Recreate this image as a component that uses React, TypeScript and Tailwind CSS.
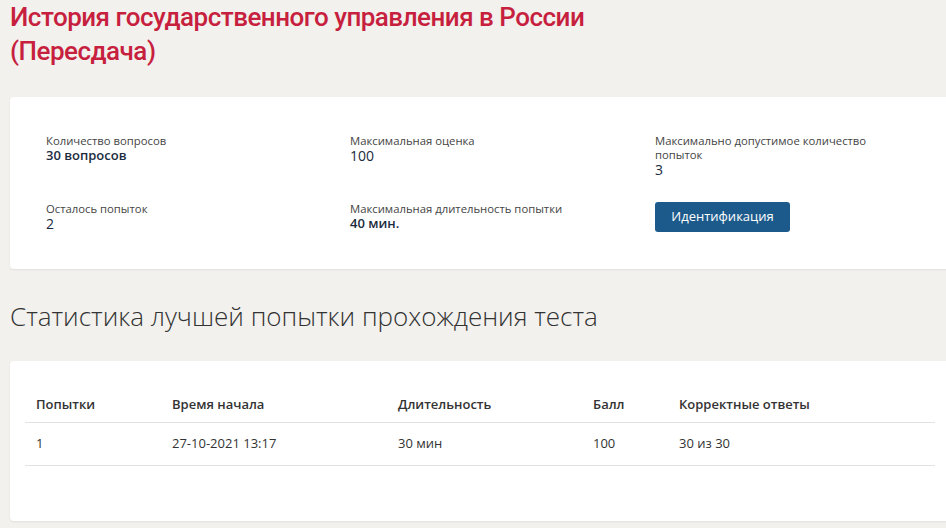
export default function App() {
  const info = [
    { label: "Количество вопросов", value: "30 вопросов", bold: true },
    { label: "Максимальная оценка", value: "100", bold: false },
    { label: "Максимально допустимое количество попыток", value: "3", bold: false },
    { label: "Осталось попыток", value: "2", bold: false },
    { label: "Максимальная длительность попытки", value: "40 мин.", bold: true },
  ];

  const head = ["Попытки", "Время начала", "Длительность", "Балл", "Корректные ответы"];
  const row = ["1", "27-10-2021 13:17", "30 мин", "100", "30 из 30"];

  return (
    <div className="min-h-screen w-[946px] overflow-hidden bg-[#f2f1ee] font-['Open_Sans',sans-serif]">
      {/* Title */}
      <h1 className="pl-[10px] pt-0 font-['Roboto',sans-serif] text-[26px] font-medium leading-[34px] tracking-[-0.5px] text-[#c71f3e]">
        История государственного управления в России
        <br />
        (Пересдача)
      </h1>

      {/* Info card */}
      <div className="ml-[10px] mt-[29px] h-[172px] w-[950px] rounded-sm bg-white pl-[36px] pt-[37px] shadow-[0_1px_2px_rgba(0,0,0,0.08)]">
        <div className="grid grid-cols-[304px_305px_230px] gap-y-[25px]">
          {info.map((it) => (
            <div key={it.label} className="flex flex-col">
              <span className="text-[11.3px] leading-[14px] text-[#444]">{it.label}</span>
              <span
                className={
                  it.bold
                    ? "text-[13px] font-semibold leading-[15px] text-[#1b2b40]"
                    : "text-[14px] leading-[15px] text-[#1b2b40]"
                }
              >
                {it.value}
              </span>
            </div>
          ))}
          <div>
            <button className="h-[30px] w-[135px] rounded-[3px] bg-[#1d5a8c] text-[13px] text-white">
              Идентификация
            </button>
          </div>
        </div>
      </div>

      {/* Stats heading */}
      <h2 className="pl-[10px] pt-[30px] text-[26px] font-light leading-[34px] text-[#333]">
        Статистика лучшей попытки прохождения теста
      </h2>

      {/* Stats card */}
      <div className="ml-[10px] mt-[28px] h-[160px] w-[950px] rounded-sm bg-white pl-[15px] pt-[34px] shadow-[0_1px_2px_rgba(0,0,0,0.08)]">
        <table className="w-[910px] border-collapse text-[13px] text-[#333]">
          <thead>
            <tr className="border-b border-[#e2e2e2]">
              {head.map((h, i) => (
                <th
                  key={h}
                  className={
                    "h-[27px] pl-[11px] text-left align-top font-semibold " +
                    ["w-[136px]", "w-[226px]", "w-[195px]", "w-[86px]", ""][i]
                  }
                >
                  {h}
                </th>
              ))}
            </tr>
          </thead>
          <tbody>
            <tr className="border-b border-[#e2e2e2]">
              {row.map((c, i) => (
                <td key={i} className="h-[43px] pl-[11px] align-middle">
                  {c}
                </td>
              ))}
            </tr>
          </tbody>
        </table>
      </div>
    </div>
  );
}
